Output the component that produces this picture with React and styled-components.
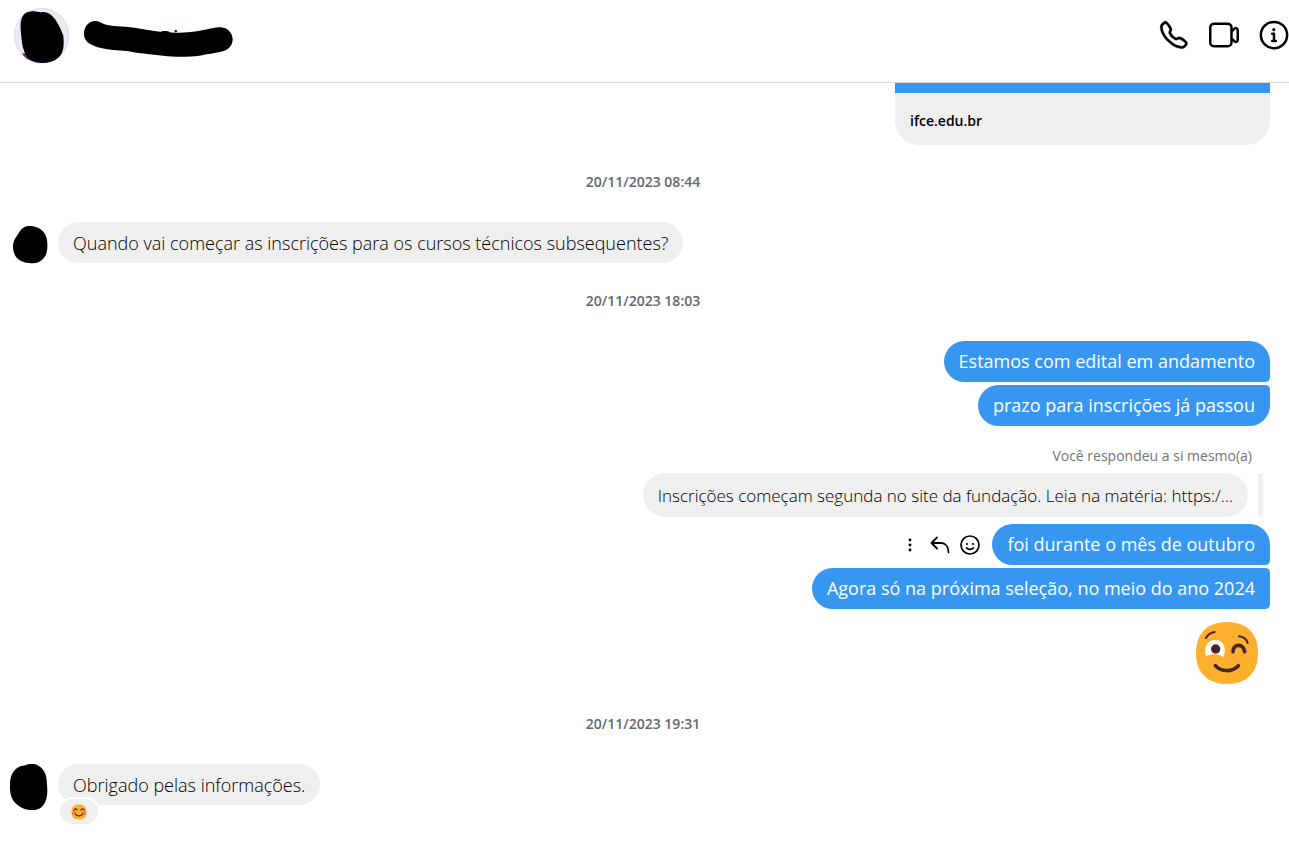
import React from "react";
import styled, { createGlobalStyle, css } from "styled-components";

const GlobalStyle = createGlobalStyle`
  *, *::before, *::after { box-sizing: border-box; }
  body {
    margin: 0;
    background: #fff;
    color: #000;
    font-family: "Segoe UI", "Open Sans", "Noto Sans", sans-serif;
  }
`;

const Page = styled.div`
  min-height: 100vh;
  display: flex;
  flex-direction: column;
`;

const Header = styled.header`
  display: flex;
  align-items: flex-start;
  justify-content: space-between;
  height: 83px;
  padding: 8px 0 0 14px;
  border-bottom: 1px solid #dbdbdb;
`;

const Contact = styled.div`
  display: flex;
  align-items: flex-start;
  gap: 13px;
`;

const NameBox = styled.div`
  position: relative;
  width: 152px;
  height: 38px;
  margin-top: 12px;
`;

const Name = styled.h1`
  margin: 0;
  padding: 3px 0 0 77px;
  font-size: 18px;
  line-height: 28px;
  font-weight: 600;
`;

const Scribble = styled.svg`
  position: absolute;
  top: 0;
  left: 0;
`;

const Actions = styled.nav`
  display: flex;
  gap: 20px;
  padding-top: 12px;
`;

const IconButton = styled.button`
  display: flex;
  align-items: center;
  justify-content: center;
  width: ${({ $size }) => $size}px;
  height: ${({ $size }) => $size}px;
  padding: 0;
  border: 0;
  background: none;
  color: #000;
  cursor: pointer;
`;

const Thread = styled.main`
  display: flex;
  flex-direction: column;
  padding: 0 3px 24px 0;
`;

const Sent = styled.section`
  display: flex;
  flex-direction: column;
  align-items: flex-end;
  gap: 3px;
  padding-right: 16px;
`;

const Received = styled.section`
  display: flex;
  align-items: flex-start;
  gap: 10px;
  min-height: 42px;
  padding-left: 10px;
`;

const AvatarSlot = styled.div`
  flex: none;
  display: flex;
  width: 38px;
  height: 42px;
`;

const Bubble = styled.p`
  margin: 0;
  padding: 8px 15px 7px;
  border-radius: 22px;
  font-size: 18px;
  line-height: 26px;
  font-weight: 300;
  background: #efefef;
  ${({ $mine }) =>
    $mine &&
    css`
      padding: 7px 15px 8px;
      background: #3797f0;
      color: #fff;
      font-weight: 400;
    `}
  ${({ $joinTop }) => $joinTop && css`border-top-right-radius: 5px;`}
  ${({ $joinBottom }) => $joinBottom && css`border-bottom-right-radius: 5px;`}
`;

const LinkCard = styled.a`
  width: 375px;
  max-width: 100%;
  padding: 17px 15px 14px;
  border-top: 10px solid #3797f0;
  border-radius: 0 0 24px 24px;
  background: #efefef;
  color: #000;
  font-size: 14px;
  line-height: 21px;
  font-weight: 600;
  text-decoration: none;
`;

const Stamp = styled.time`
  display: block;
  height: 77px;
  padding-top: 27px;
  text-align: center;
  font-size: 14px;
  line-height: 20px;
  font-weight: 600;
  color: #65676b;
`;

const ReplyBlock = styled.div`
  display: flex;
  flex-direction: column;
  align-items: flex-end;
  padding: 17px 7px 4px 0;
`;

const ReplyLabel = styled.span`
  padding: 0 11px 7px 0;
  font-size: 14px;
  line-height: 20px;
  color: #737373;
`;

const Quote = styled.div`
  display: flex;
  gap: 10px;
`;

const QuoteText = styled.p`
  margin: 0;
  padding: 10px 15px 8px;
  border-radius: 22px;
  background: #efefef;
  font-size: 17px;
  line-height: 26px;
  font-weight: 300;
`;

const QuoteBar = styled.span`
  width: 5px;
  border-radius: 3px;
  background: #efefef;
`;

const MessageRow = styled.div`
  display: flex;
  align-items: center;
  gap: 12px;
`;

const Tools = styled.div`
  display: flex;
  gap: 10px;
`;

const BigEmoji = styled.div`
  display: flex;
  padding: 10px 12px 3px;
`;

const BubbleWrap = styled.div`
  position: relative;
`;

const Reaction = styled.button`
  position: absolute;
  left: 0;
  top: 33px;
  display: flex;
  align-items: center;
  justify-content: center;
  width: 42px;
  height: 29px;
  padding: 0;
  border: 2px solid #fff;
  border-radius: 15px;
  background: #efefef;
  cursor: pointer;
`;

const HeaderAvatar = () => (
  <svg width="56" height="56" viewBox="42 24 168 168" role="img" aria-label="Foto do perfil">
    <circle cx="125" cy="107" r="82" fill="#ece9f3" stroke="#d3cfda" strokeWidth="2" />
    <path d="M67 160C84 181 103 189 125 189C143 189 158 185 170 177L150 168L85 162Z" fill="#2b1233" />
    <path d="M66 163L78 166L91 180L82 178Z" fill="#6d3559" />
    <path
      d="M97 34C107 34 114 36 125 37C137 34 150 40 162 54C174 68 184 90 190 107C192 128 192 147 184 162C176 176 159 184 143 187C122 190 100 186 86 175C72 162 66 137 64 110C62 86 59 64 68 49C74 38 84 35 97 34Z"
      fill="#000"
    />
  </svg>
);

const NameScribble = () => (
  <Scribble width="152" height="38" viewBox="249 60 456 114" aria-hidden="true">
    <path d="M260 121L268 132L263 130Z" fill="#d9952f" />
    <path
      d="M286 63C297 63 304 69 314 73C333 80 370 79 403 83C440 88 473 97 530 98C571 99 605 91 640 84C651 81 665 80 676 85C689 91 698 104 698 119C697 135 688 146 673 152C654 158 620 162 598 167C568 171 520 171 490 167C452 163 420 161 382 153C350 150 323 150 299 143C278 138 257 127 253 111C248 85 263 63 286 63Z"
      fill="#000"
    />
  </Scribble>
);

const FirstAvatar = () => (
  <svg width="38" height="46" viewBox="30 21 114 138" role="img" aria-label="Foto do perfil">
    <path
      d="M80 34C98 30 118 37 130 50C141 63 143 79 142 98C142 118 132 133 118 140C103 147 75 146 59 136C45 127 38 110 39 91C40 77 47 68 54 58C61 47 67 37 80 34Z"
      fill="#000"
    />
  </svg>
);

const SecondAvatar = () => (
  <svg width="38" height="46" viewBox="30 42 114 138" role="img" aria-label="Foto do perfil">
    <path
      d="M78 45C90 39 105 40 118 49C132 59 139 73 140 91C141 106 144 125 140 142C137 161 125 177 106 180C85 184 57 173 43 156C31 142 29 121 30 101C31 78 39 59 58 50C66 47 71 48 78 45Z"
      fill="#000"
    />
  </svg>
);

const PhoneIcon = () => (
  <svg width="30" height="30" viewBox="0 0 24 24" fill="currentColor" stroke="currentColor" strokeWidth="0.2" aria-hidden="true">
    <path d="M18.227 22.912c-4.913 0-9.286-3.627-11.486-5.828C4.486 14.83.731 10.291.921 5.231a3.289 3.289 0 0 1 .908-2.138 17.116 17.116 0 0 1 1.865-1.71 2.307 2.307 0 0 1 3.004.174 13.283 13.283 0 0 1 3.658 5.325 2.551 2.551 0 0 1-.19 1.941l-.455.853a.463.463 0 0 0-.024.387 7.57 7.57 0 0 0 4.077 4.075.455.455 0 0 0 .386-.024l.853-.455a2.548 2.548 0 0 1 1.94-.19 13.278 13.278 0 0 1 5.326 3.658 2.309 2.309 0 0 1 .174 3.003 17.319 17.319 0 0 1-1.71 1.866 3.29 3.29 0 0 1-2.138.91 10.27 10.27 0 0 1-.368.006Zm-13.144-20a.27.27 0 0 0-.167.054A15.121 15.121 0 0 0 3.28 4.47a1.289 1.289 0 0 0-.36.836c-.161 4.301 3.21 8.34 5.235 10.364s6.06 5.403 10.366 5.236a1.284 1.284 0 0 0 .835-.36 15.217 15.217 0 0 0 1.504-1.637.324.324 0 0 0-.047-.41 11.62 11.62 0 0 0-4.457-3.119.545.545 0 0 0-.411.044l-.854.455a2.452 2.452 0 0 1-2.071.116 9.571 9.571 0 0 1-5.189-5.188 2.457 2.457 0 0 1 .115-2.071l.456-.855a.544.544 0 0 0 .043-.41 11.629 11.629 0 0 0-3.118-4.458.36.36 0 0 0-.244-.1Z" />
  </svg>
);

const VideoIcon = () => (
  <svg width="30" height="30" viewBox="0 0 24 24" fill="none" stroke="currentColor" strokeWidth="2" strokeLinejoin="round" aria-hidden="true">
    <rect x="1" y="3" width="17" height="18" rx="3" />
    <path d="m18 9.146 2.495-2.256A1.5 1.5 0 0 1 23 8.003v7.994a1.5 1.5 0 0 1-2.507 1.113L18 14.854" />
  </svg>
);

const InfoIcon = () => (
  <svg width="30" height="30" viewBox="0 0 24 24" fill="none" stroke="currentColor" strokeWidth="2" strokeLinecap="round" strokeLinejoin="round" aria-hidden="true">
    <circle cx="12" cy="12" r="10.5" />
    <circle cx="11.82" cy="7.7" r="1.25" fill="currentColor" stroke="none" />
    <path d="M10.57 16.78h2.86M10.57 11.05H12v5.73" />
  </svg>
);

const MoreIcon = () => (
  <svg width="20" height="20" viewBox="0 0 20 20" fill="currentColor" aria-hidden="true">
    <circle cx="10" cy="5" r="1.4" />
    <circle cx="10" cy="10" r="1.4" />
    <circle cx="10" cy="15" r="1.4" />
  </svg>
);

const ReplyIcon = () => (
  <svg width="20" height="20" viewBox="0 0 20 20" fill="none" stroke="currentColor" strokeWidth="1.8" strokeLinecap="round" strokeLinejoin="round" aria-hidden="true">
    <path d="M7 2.5 1.5 8 7 13.5M1.5 8H11c4.5 0 7.5 3.5 7.5 9.3" />
  </svg>
);

const SmileIcon = () => (
  <svg width="20" height="20" viewBox="0 0 20 20" fill="none" stroke="currentColor" strokeWidth="1.7" strokeLinecap="round" aria-hidden="true">
    <circle cx="10" cy="10" r="9" />
    <circle cx="7" cy="9" r="1.1" fill="currentColor" stroke="none" />
    <circle cx="13" cy="9" r="1.1" fill="currentColor" stroke="none" />
    <path d="M6.5 12.8c1.9 2 5.1 2 7 0" />
  </svg>
);

const WinkEmoji = () => (
  <svg width="62" height="62" viewBox="49 36 186 186" role="img" aria-label="Rosto piscando">
    <path d="M142 36C201 36 235 70 235 129C235 188 201 222 142 222C83 222 49 188 49 129C49 70 83 36 142 36Z" fill="#ffaf2e" />
    <path d="M79 138C70 113 84 90 106 90C130 90 143 112 131 141C117 131 96 131 79 138Z" fill="#fff" />
    <circle cx="108" cy="117" r="14" fill="#43282f" />
    <g fill="none" stroke="#43282f" strokeLinecap="round">
      <path d="M79 84C84 74 92 68 105 66M178 79C191 80 200 87 204 99" strokeWidth="6" />
      <path d="M160 125C160 101 191 99 195 125" strokeWidth="11" />
      <path d="M107 167C123 186 158 187 176 167" strokeWidth="11" />
    </g>
  </svg>
);

const BlushEmoji = () => (
  <svg width="16" height="16" viewBox="0 0 32 32" role="img" aria-label="Rosto sorridente">
    <path d="M16 1C26 1 31 6 31 16C31 26 26 31 16 31C6 31 1 26 1 16C1 6 6 1 16 1Z" fill="#ffaf2e" />
    <circle cx="6" cy="18" r="4" fill="#ff7058" />
    <circle cx="26" cy="18" r="4" fill="#ff7058" />
    <g fill="none" stroke="#43282f" strokeWidth="2.5" strokeLinecap="round">
      <path d="M6 12C7 9 11 9 12 12M20 12C21 9 25 9 26 12M9 20C12 25 20 25 23 20" />
    </g>
  </svg>
);

export default function App() {
  return (
    <Page>
      <GlobalStyle />
      <Header>
        <Contact>
          <HeaderAvatar />
          <NameBox>
            <Name>Di</Name>
            <NameScribble />
          </NameBox>
        </Contact>
        <Actions aria-label="Ações da conversa">
          <IconButton $size={30} aria-label="Ligar"><PhoneIcon /></IconButton>
          <IconButton $size={30} aria-label="Chamada de vídeo"><VideoIcon /></IconButton>
          <IconButton $size={30} aria-label="Informações"><InfoIcon /></IconButton>
        </Actions>
      </Header>
      <Thread>
        <Sent>
          <LinkCard href="#ifce">ifce.edu.br</LinkCard>
        </Sent>
        <Stamp>20/11/2023 08:44</Stamp>
        <Received>
          <AvatarSlot><FirstAvatar /></AvatarSlot>
          <Bubble>Quando vai começar as inscrições para os cursos técnicos subsequentes?</Bubble>
        </Received>
        <Stamp>20/11/2023 18:03</Stamp>
        <Sent>
          <Bubble $mine $joinBottom>Estamos com edital em andamento</Bubble>
          <Bubble $mine $joinTop>prazo para inscrições já passou</Bubble>
          <ReplyBlock>
            <ReplyLabel>Você respondeu a si mesmo(a)</ReplyLabel>
            <Quote>
              <QuoteText>Inscrições começam segunda no site da fundação. Leia na matéria: https:/...</QuoteText>
              <QuoteBar />
            </Quote>
          </ReplyBlock>
          <MessageRow>
            <Tools>
              <IconButton $size={20} aria-label="Mais opções"><MoreIcon /></IconButton>
              <IconButton $size={20} aria-label="Responder"><ReplyIcon /></IconButton>
              <IconButton $size={20} aria-label="Reagir"><SmileIcon /></IconButton>
            </Tools>
            <Bubble $mine $joinBottom>foi durante o mês de outubro</Bubble>
          </MessageRow>
          <Bubble $mine $joinTop $joinBottom>Agora só na próxima seleção, no meio do ano 2024</Bubble>
          <BigEmoji><WinkEmoji /></BigEmoji>
        </Sent>
        <Stamp>20/11/2023 19:31</Stamp>
        <Received>
          <AvatarSlot><SecondAvatar /></AvatarSlot>
          <BubbleWrap>
            <Bubble>Obrigado pelas informações.</Bubble>
            <Reaction aria-label="Ver reações"><BlushEmoji /></Reaction>
          </BubbleWrap>
        </Received>
      </Thread>
    </Page>
  );
}
